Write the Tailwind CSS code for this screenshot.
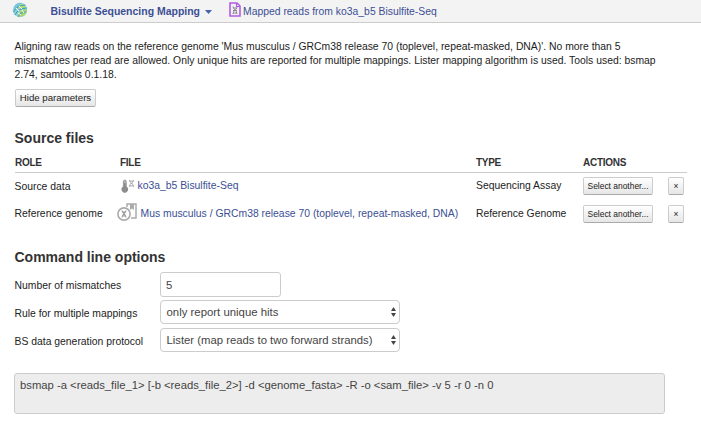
<!DOCTYPE html>
<html lang="en">
<head>
<meta charset="utf-8">
<title>Bisulfite Sequencing Mapping</title>
<script src="https://cdn.jsdelivr.net/npm/@tailwindcss/browser@4"></script>
</head>
<body class="bg-white font-['Liberation_Sans',Arial,sans-serif] text-[10.39px] leading-[14px] text-[#222] w-[701px] h-[430px] overflow-hidden">
<header class="h-[23px] bg-[#f3f3f3] border-b border-[#ccc] flex items-center pl-3 text-[#3b4f94] whitespace-nowrap">
  <svg class="w-4 h-4 shrink-0 -mt-0.5" viewBox="0 0 16 16" fill="none">
    <circle cx="8" cy="8" r="7.200" fill="#8fd0d8"/>
    <path d="M2 5Q5 0 10 1L7 5L3 8Z" fill="#7cc3dd"/>
    <path d="M8 2q4 0 6 4L9 7 6 6z" fill="#b4dc6c"/>
    <path d="M9 8l5-1 1 3-3 4-5 1-1-3z" fill="#a9d56d"/>
    <path d="M1.500 10Q5 3 13.500 3M3 13Q6 6 15 6M6 15Q8 10 14 10" stroke="#359bc4" stroke-width="1"/>
    <path d="M4 6l3 3M7 4l3 3M6 11l3 2M10 8l2 3" stroke="#f4faf4" stroke-width="1"/>
  </svg>
  <span class="ml-[22.5px] mt-[2px] w-[154.500px] font-bold text-[10.47px]">Bisulfite Sequencing Mapping</span>
  <svg class="w-[7px] h-1 shrink-0 mt-px" viewBox="0 0 7 4"><path d="M0 0h7L3.500 4z" fill="#4563a8"/></svg>
  <svg class="ml-[17px] w-3 h-[15px] shrink-0 -mt-[3px]" viewBox="0 0 12 15" fill="none">
    <path d="M1 1h7l3 3v10H1z" fill="#f3effa" stroke="#b05fe0" stroke-width="1.600"/>
    <path d="M7.500 1v3.500H11" stroke="#b05fe0" stroke-width="1.200"/>
    <path d="M4 4.500c0 3 4 3.500 4 7.500M8 5c0 3.500-4 3-4 7M4 6h3.500M4 8.500h4M4 11h4" stroke="#888"/>
  </svg>
  <span class="ml-[2px] mt-[2px]">Mapped reads from ko3a_b5 Bisulfite-Seq</span>
</header>
<main class="pl-[15px] pt-[17px]">
  <p class="-ml-[0.5px] whitespace-nowrap">Aligning raw reads on the reference genome 'Mus musculus / GRCm38 release 70 (toplevel, repeat-masked, DNA)'. No more than 5<br>mismatches per read are allowed. Only unique hits are reported for multiple mappings. Lister mapping algorithm is used. Tools used: bsmap<br>2.74, samtools 0.1.18.</p>
  <button class="block mt-[7px] w-[81px] h-[18px] border border-[#ccc] border-b-[#aaa] rounded-[2px] bg-linear-to-b from-white to-[#e6e6e6] text-[9.67px] leading-4 whitespace-nowrap">Hide parameters</button>
  <h2 class="-ml-[0.5px] mt-[21px] h-5 text-[14px] leading-5 font-bold text-[#333]">Source files</h2>
  <section class="w-[672px] whitespace-nowrap">
    <div class="mt-[7px] h-[18px] grid grid-cols-[105px_356px_107px_104px] border-b border-[#ccc] text-[10px] leading-[15px] tracking-[-0.28px] font-bold text-[#333]">
      <span>ROLE</span><span>FILE</span><span>TYPE</span><span>ACTIONS</span>
    </div>
    <div class="h-7 grid grid-cols-[102px_359px_107px_93px_1fr] items-center">
      <span class="-ml-[0.5px]">Source data</span>
      <span class="flex items-center pl-1 -mt-[2px] text-[#3b4f94]">
        <svg class="w-[14px] h-[14px] mr-[2.500px] -mt-px" viewBox="0 0 14 14" fill="none">
          <path d="M2.400 2.500a1.400 1.400 0 0 1 2.800 0v5.500a2.800 2.800 0 1 1-2.800 0z" fill="#b5b5b5" stroke="#999"/>
          <circle cx="3.800" cy="10.300" r="3.100" fill="#8c8c8c"/><path d="M3.800 4v5" stroke="#888" stroke-width="1.500"/>
          <path d="M8.500 1c0 3 4 3 4 7M12.500 1c0 3-4 3-4 7M8.500 2.200h4M8.500 6.800h4M9.500 4.500h2" stroke="#aaa"/>
        </svg>ko3a_b5 Bisulfite-Seq</span>
      <span class="-mt-[2px]">Sequencing Assay</span>
      <button class="-mt-[2px] justify-self-start w-[70px] h-[18px] border border-[#ccc] border-b-[#aaa] rounded-[2px] bg-linear-to-b from-white to-[#e6e6e6] text-[8.45px] leading-4">Select another...</button>
      <button class="-mt-[2px] justify-self-start -ml-2 w-4 h-[18px] border border-[#ccc] border-b-[#aaa] rounded-[2px] bg-linear-to-b from-white to-[#e6e6e6] text-[8.45px] leading-4">×</button>
    </div>
    <div class="h-7 grid grid-cols-[102px_359px_107px_93px_1fr] items-center">
      <span class="-ml-[0.5px] -mt-[2px]">Reference genome</span>
      <span class="flex items-center -mt-[2px] text-[#3b4f94]">
        <svg class="w-5 h-[18px] mr-[3.500px] -mt-[5px]" viewBox="0 0 20 18" fill="none">
          <path d="M10 4V1h9v14h-5" fill="#fff" stroke="#aaa" stroke-width="1.500"/>
          <path d="M13 1h4v6l-2-1.500L13 7z" fill="#aaa"/>
          <circle cx="7" cy="11" r="6.100" fill="#fff" stroke="#aaa" stroke-width="1.600"/>
          <path d="M5 7.500c0 3 4 3.500 4 7M9 7.500C9 10.500 5 11 5 14.500M5 9h4M5 13h4" stroke="#999" stroke-width="1.100"/>
        </svg>Mus musculus / GRCm38 release 70 (toplevel, repeat-masked, DNA)</span>
      <span class="-mt-[2px] text-[10.35px]">Reference Genome</span>
      <button class="-mt-[2px] justify-self-start w-[70px] h-[18px] border border-[#ccc] border-b-[#aaa] rounded-[2px] bg-linear-to-b from-white to-[#e6e6e6] text-[8.45px] leading-4">Select another...</button>
      <button class="-mt-[2px] justify-self-start -ml-2 w-4 h-[18px] border border-[#ccc] border-b-[#aaa] rounded-[2px] bg-linear-to-b from-white to-[#e6e6e6] text-[8.45px] leading-4">×</button>
    </div>
  </section>
  <h2 class="-ml-[0.5px] mt-[18px] h-5 text-[14px] leading-5 font-bold text-[#333]">Command line options</h2>
  <section class="mt-[5px] grid grid-cols-[145px_240px] whitespace-nowrap">
    <label class="-ml-[0.5px] h-7 pt-[7px]">Number of mismatches</label>
    <input value="5" class="w-[121px] h-[25px] border border-[#ccc] rounded-[3px] pl-[5px] text-[11.3px] text-[#444]">
    <label class="-ml-[0.5px] h-7 pt-[7px]">Rule for multiple mappings</label>
    <div class="h-6 border border-[#ccc] rounded-[4px] pl-[5.500px] pr-[3px] flex items-center justify-between text-[11.38px] text-[#444]"><span>only report unique hits</span>
      <svg class="w-[5px] h-[10px]" viewBox="0 0 5 10"><path d="M0 4h5L2.500 0zM0 6h5L2.500 10z" fill="#444"/></svg></div>
    <label class="-ml-[0.5px] h-7 pt-[7px]">BS data generation protocol</label>
    <div class="h-6 border border-[#ccc] rounded-[4px] pl-[5.500px] pr-[3px] flex items-center justify-between text-[11.3px] text-[#444]"><span>Lister (map reads to two forward strands)</span>
      <svg class="w-[5px] h-[10px]" viewBox="0 0 5 10"><path d="M0 4h5L2.500 0zM0 6h5L2.500 10z" fill="#444"/></svg></div>
  </section>
  <div class="-ml-px mt-[17px] w-[651px] h-[41px] border border-[#ccc] rounded-[3px] bg-[#ededed] pl-[5px] pt-1 text-[11.28px] leading-[15px] text-[#444] whitespace-nowrap">bsmap -a &lt;reads_file_1&gt; [-b &lt;reads_file_2&gt;] -d &lt;genome_fasta&gt; -R -o &lt;sam_file&gt; -v 5 -r 0 -n 0</div>
</main>
</body>
</html>
